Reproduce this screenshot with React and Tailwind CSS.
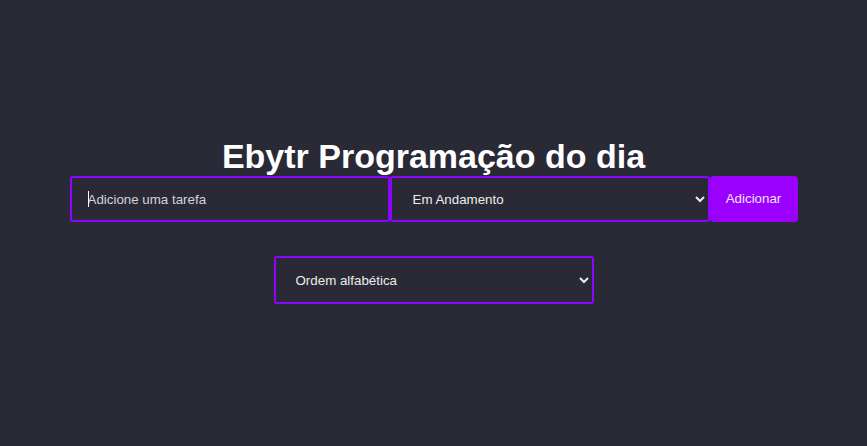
import { useEffect, useRef } from 'react';

export default function App() {
    const inputRef = useRef(null);

    useEffect(() => {
        inputRef.current?.focus();
    }, []);

    return (
        <div className="min-h-screen bg-[#2a2a36] flex flex-col items-center justify-center pb-[4px] font-['Liberation_Sans',Arial,sans-serif]">
            <h1 className="text-[34px] leading-[37px] font-bold text-white mb-[1px]">Ebytr Programação do dia</h1>

            {/* Formulário */}
            <div className="flex items-stretch">
                <div className="relative">
                    <input
                        ref={inputRef}
                        type="text"
                        placeholder="Adicione uma tarefa"
                        className="w-[320px] h-[46px] bg-transparent border-2 border-[#8a05ff] rounded-[3px] pl-[16px] text-[13.33px] text-[#e6e6e6] placeholder:text-[#d4d4d8] caret-white outline-none"
                    />
                    {/* cursor */}
                    <span className="pointer-events-none absolute left-[18px] top-[15px] h-[16px] w-px bg-white" />
                </div>
                <select
                    defaultValue="andamento"
                    className="w-[320px] h-[46px] bg-[#2a2a36] border-2 border-[#8a05ff] rounded-[3px] pl-[17px] pr-[4px] text-[13.33px] text-[#ececec] outline-none"
                >
                    <option value="pendente">Pendente</option>
                    <option value="andamento">Em Andamento</option>
                    <option value="pronto">Pronto</option>
                </select>
                <button className="w-[88px] h-[46px] bg-[#9b00ff] rounded-[4px] text-[13.33px] text-[#f0e4ff]">
                    Adicionar
                </button>
            </div>

            {/* Ordenação */}
            <select
                defaultValue="alfa"
                className="mt-[34px] w-[320px] h-[48px] bg-[#2a2a36] border-2 border-[#8a05ff] rounded-[3px] pl-[16px] pr-[4px] text-[13.33px] text-[#ececec] outline-none"
            >
                <option value="alfa">Ordem alfabética</option>
                <option value="data">Data de criação</option>
                <option value="status">Status</option>
            </select>
        </div>
    );
}
